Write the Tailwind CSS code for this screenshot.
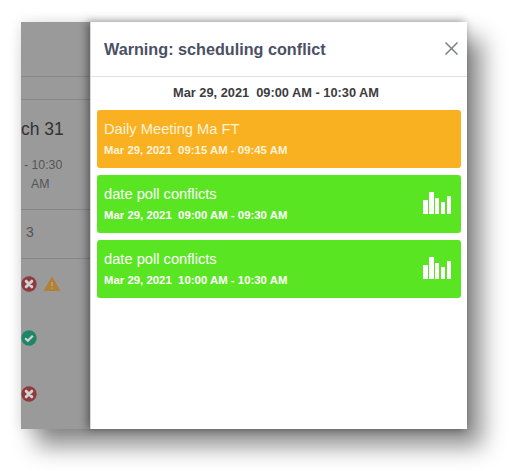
<!DOCTYPE html>
<html><head><meta charset="utf-8">
<script src="https://cdn.jsdelivr.net/npm/@tailwindcss/browser@4"></script>
</head>
<body class="bg-white overflow-hidden font-['Liberation_Sans',Arial,sans-serif]">
<div class="w-[509px] h-[471px] pl-[21px] pt-[22px]">
<div class="w-[446px] h-[407px] flex shadow-[15px_17px_22px_rgba(0,0,0,0.45),0_0_12px_rgba(0,0,0,0.12)]">
  <div class="w-[69px] h-full bg-[#9a9a9a] overflow-hidden text-[#3c3c3c] shrink-0">
    <div class="h-[55px] border-b border-[#878787]"></div>
    <div class="h-[23px] border-b border-[#878787]"></div>
    <div class="h-[110px] border-b border-[#878787] flex flex-col">
      <div class="mt-[16px] h-[26px] text-[17.5px] leading-[26px] whitespace-nowrap text-[#333]">ch 31</div>
      <div class="mt-[14px] text-[12.3px] leading-[19px] text-[#555] pl-[3px] whitespace-nowrap">- 10:30</div>
      <div class="text-[12.3px] leading-[19px] text-[#555] pl-[10px] whitespace-nowrap">AM</div>
    </div>
    <div class="h-[49px] border-b border-[#878787] text-[14px] text-[#555] pl-[5px] pt-[14px] leading-[16px]">3</div>
    <div class="flex items-center h-[27px] mt-[11px] gap-[6px]">
      <svg class="w-[16px] h-[16px] ml-0" viewBox="0 0 16 16"><circle cx="8" cy="8" r="7.7" fill="#8f3a3e"/><path d="M5.2 5.2l5.6 5.6M10.8 5.2l-5.6 5.6" stroke="#d2d2d2" stroke-width="3" stroke-linecap="round"/></svg>
      <svg class="w-[18px] h-[15px]" viewBox="0 0 18 15"><path d="M9 0.5L17.7 15H0.3z" fill="#b08137"/><path d="M9 6v4M9 11.5v1.2" stroke="#c9ac7c" stroke-width="1.2"/></svg>
    </div>
    <div class="h-[16px] mt-[33px]">
      <svg class="w-[16px] h-[16px]" viewBox="0 0 16 16"><circle cx="8" cy="8" r="7.7" fill="#1f8468"/><path d="M4.2 8.2l2.7 2.6 4.9-5" fill="none" stroke="#d2d2d2" stroke-width="2.2"/></svg>
    </div>
    <div class="h-[16px] mt-[40px]">
      <svg class="w-[16px] h-[16px]" viewBox="0 0 16 16"><circle cx="8" cy="8" r="7.7" fill="#8f3a3e"/><path d="M5.2 5.2l5.6 5.6M10.8 5.2l-5.6 5.6" stroke="#d2d2d2" stroke-width="3" stroke-linecap="round"/></svg>
    </div>
  </div>
  <div class="relative flex-1 h-full bg-white border-l border-[#d8d8d8] flex flex-col shadow-[-3px_0_8px_rgba(0,0,0,0.4)]">
    <div class="h-[55px] shrink-0 border-b border-[#dee2e6] flex items-center justify-between pl-[13px] pr-[8px]">
      <span class="text-[16.2px] font-bold text-[#4a5066] leading-[24px]">Warning: scheduling conflict</span>
      <svg class="w-[13px] h-[13px] mr-[1px] -mt-[1px]" viewBox="0 0 13 13"><path d="M0.5 0.5l12 12M12.5 0.5l-12 12" stroke="#7b7f85" stroke-width="1.5"/></svg>
    </div>
    <div class="h-[32px] mb-[1px] pr-[6px] shrink-0 flex items-center justify-center text-[12.8px] font-bold text-[#3d3d3d] whitespace-pre">Mar 29, 2021  09:00 AM - 10:30 AM</div>
    <div class="flex flex-col gap-[7px] pl-[6px] pr-[6px]">
      <div class="h-[58px] rounded-[3px] bg-[#f9b122] text-white pl-[7px] pt-[11px]">
        <div class="text-[14.7px] leading-[16px] text-[#fff3d8]">Daily Meeting Ma FT</div>
        <div class="text-[11.4px] font-bold leading-[13px] mt-[7px] whitespace-pre text-[#fff3d8]">Mar 29, 2021  09:15 AM - 09:45 AM</div>
      </div>
      <div class="h-[58px] rounded-[3px] bg-[#5ae522] text-white pl-[7px] pt-[11px] flex justify-between">
        <div>
          <div class="text-[14.7px] leading-[16px]">date poll conflicts</div>
          <div class="text-[11.4px] font-bold leading-[13px] mt-[7px] whitespace-pre">Mar 29, 2021  09:00 AM - 09:30 AM</div>
        </div>
        <div class="flex items-end gap-[1.4px] h-[22px] mt-[6px] mr-[10px]">
          <i class="block w-[4.4px] h-[14px] bg-white"></i><i class="block w-[4.4px] h-[22px] bg-white"></i><i class="block w-[4.4px] h-[16px] bg-white"></i><i class="block w-[4.4px] h-[12px] bg-white"></i><i class="block w-[4.4px] h-[18px] bg-white"></i>
        </div>
      </div>
      <div class="h-[58px] rounded-[3px] bg-[#5ae522] text-white pl-[7px] pt-[11px] flex justify-between">
        <div>
          <div class="text-[14.7px] leading-[16px]">date poll conflicts</div>
          <div class="text-[11.4px] font-bold leading-[13px] mt-[7px] whitespace-pre">Mar 29, 2021  10:00 AM - 10:30 AM</div>
        </div>
        <div class="flex items-end gap-[1.4px] h-[22px] mt-[6px] mr-[10px]">
          <i class="block w-[4.4px] h-[14px] bg-white"></i><i class="block w-[4.4px] h-[22px] bg-white"></i><i class="block w-[4.4px] h-[16px] bg-white"></i><i class="block w-[4.4px] h-[12px] bg-white"></i><i class="block w-[4.4px] h-[18px] bg-white"></i>
        </div>
      </div>
    </div>
  </div>
</div>
</div>
</body></html>
